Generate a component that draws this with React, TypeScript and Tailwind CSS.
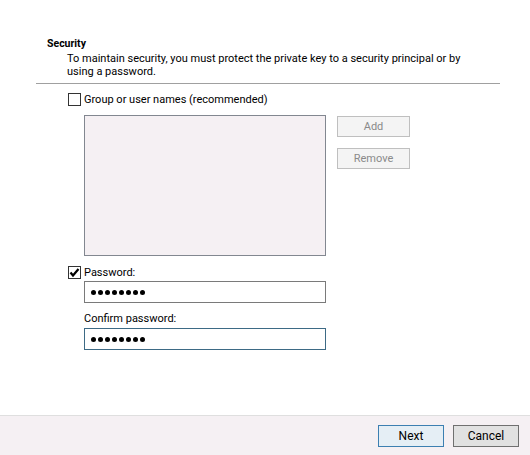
import React from "react";

function Check({ checked }: { checked?: boolean }) {
  return (
    <span className="w-[13px] h-[13px] border border-[#333333] bg-white flex items-center justify-center shrink-0">
      {checked && (
        <svg width="11" height="11" viewBox="0 0 11 11">
          <path d="M1.5 5.5 L4 8.5 L9.5 2" fill="none" stroke="#000" strokeWidth="2.2" />
        </svg>
      )}
    </span>
  );
}

function Dots() {
  return (
    <div className="flex gap-[2px] items-center">
      {Array.from({ length: 8 }).map((_, i) => (
        <span key={i} className="w-[5px] h-[5px] rounded-full bg-black" />
      ))}
    </div>
  );
}

export default function App() {
  return (
    <div
      className="w-[530px] h-[455px] bg-white flex flex-col text-[11px] text-black"
      style={{ fontFamily: 'Roboto, "Noto Sans", sans-serif' }}
    >
      <div className="flex-1 flex flex-col">
        <div className="pl-[47px] pt-[36px] font-bold text-[10.5px] leading-[15px]">Security</div>
        <div className="pl-[67px] text-[11px] leading-[13px] mt-[1px]">
          To maintain security, you must protect the private key to a security principal or by
          <br />
          using a password.
        </div>
        <div className="ml-[36px] mr-[30px] mt-[5px] h-px bg-[#a0a0a0]" />

        <label className="flex items-center gap-[3px] ml-[68px] mt-[8px] leading-[15px]">
          <Check />
          <span>Group or user names (recommended)</span>
        </label>

        <div className="flex ml-[84px] mt-[8px] gap-[11px]">
          <div className="w-[242px] h-[141px] border border-[#828790] bg-[#f5f0f3]" />
          <div className="flex flex-col gap-[11px] pt-[1px]">
            <button className="w-[73px] h-[21px] border border-[#bfbfbf] bg-[#f4f4f4] text-[#8a8a8a] leading-none">
              Add
            </button>
            <button className="w-[73px] h-[21px] border border-[#bfbfbf] bg-[#f4f4f4] text-[#8a8a8a] leading-none">
              Remove
            </button>
          </div>
        </div>

        <label className="flex items-center gap-[3px] ml-[68px] mt-[9px] leading-[15px]">
          <Check checked />
          <span>Password:</span>
        </label>
        <div className="ml-[84px] mt-[1px] w-[242px] h-[22px] border border-[#7a7a7a] bg-white flex items-center pl-[6px]">
          <Dots />
        </div>

        <div className="ml-[84px] mt-[8px] leading-[15px]">Confirm password:</div>
        <div className="ml-[84px] mt-[2px] w-[242px] h-[22px] border border-[#3d6a85] bg-white flex items-center pl-[6px]">
          <Dots />
        </div>
      </div>

      <div className="h-[40px] border-t border-[#dfdfdf] bg-[#f5f0f3] flex justify-end items-start pt-[9px] pr-[11px] gap-[9px]">
        <button className="w-[66px] h-[22px] border border-[#3c7fb1] bg-[#e5eef5] text-[12px] leading-none">Next</button>
        <button className="w-[66px] h-[22px] border border-[#707070] bg-[#e1e1e1] text-[12px] leading-none">Cancel</button>
      </div>
    </div>
  );
}
